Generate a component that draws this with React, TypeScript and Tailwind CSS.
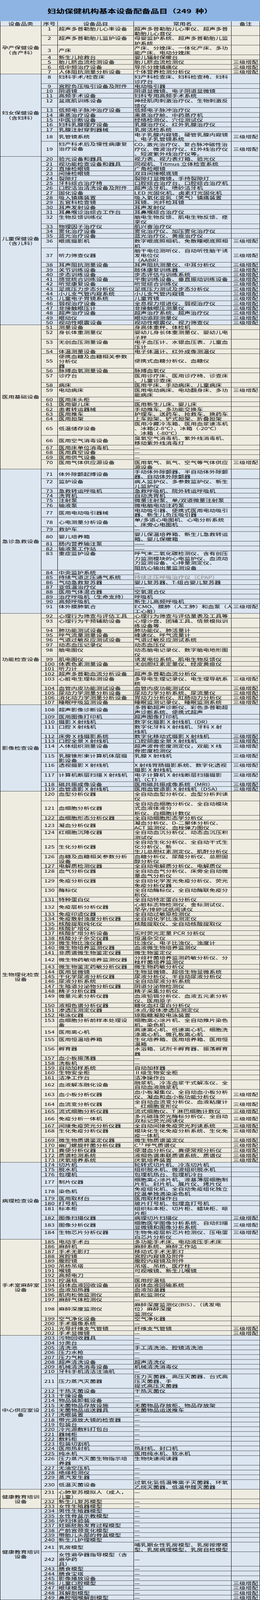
import { useLayoutEffect, useRef, useState } from "react";

const SECTIONS: { cat: string[]; bg: string; rows: string }[] = [
  {
    cat: ["孕产保健设备", "（含产科）"],
    bg: "bg-[#EEECE1]",
    rows: `
1|超声多普勒胎儿心率设备|超声多普勒胎儿心率仪、超声多普^勒胎儿心音仪||t
2|超声多普勒胎儿监护设备|母婴监护系统、超声多普勒胎儿监^护系统||t
3|产床|产床、分娩床、一体化产床、多功^能产床、电动分娩床||m
4|新生儿抢救台|婴儿辐射保暖台||
5|胎儿脐血流检测设备|胎儿脐血流检测仪|3|
6|低中频治疗设备|导乐分娩镇痛仪|3|
7|人体阻抗测量分析设备|个体营养检测分析仪|3|`,
  },
  {
    cat: ["妇女保健设备", "（含妇科）"],
    bg: "bg-[#DCE6F1]",
    rows: `
8|妇科手术/检查床|妇产科检查床、妇科检查椅、妇科^诊疗台||t
9|宫腔负压吸引设备及附件|电动吸引器||
10|阴道镜|阴道显微镜、电子阴道显微镜||
11|高频手术设备|妇科专用高频手术系统||
12|盆底肌训练设备|神经肌肉刺激治疗仪、生物刺激反^馈仪||t
13|低频电子脉冲治疗设备|低频电子脉冲治疗仪||
14|熏蒸治疗设备|熏蒸治疗舱、中药蒸疗机||
15|中医诊断设备|经络检测仪、穴位测试仪||
16|妇科乳腺理疗设备|乳腺治疗仪、红外乳腺治疗仪||
17|乳腺注射穿刺器械|乳房活检系统||
18|乳管镜系统|电子乳腺内窥镜、硬管乳腺内窥镜^、电子乳管镜系统|3|m
19|妇产科术后及慢性病康复^治疗设备|CO₂ 激光治疗仪、复合脉冲磁性治^疗仪、微波治疗仪、红外线治疗仪^、短波紫外线治疗仪等。|3|x`,
  },
  {
    cat: ["儿童保健设备", "（含儿科）"],
    bg: "bg-[#DCE6F1]",
    rows: `
20|验光设备和器具|视力表、视力表灯箱、验光仪||
21|视功能检查设备和器具|同视机、Titmus 立体检查系统||
22|直接检眼镜|广角检眼镜||
23|间接检眼镜|双目间接眼底镜||
24|裂隙灯|裂隙灯显微镜，手持裂隙灯||
25|牙科综合治疗椅|口腔综合治疗台、口腔综合治疗机||
26|口腔洁治清洗设备及附件|超声洁牙机、喷砂洁牙机||
27|固化设备|LED 光固化机、卤素灯光固化机||
28|吸入镇痛装置|吸入氧化亚氮（笑气）镇痛装置||
29|五官科检查镜|耳镜、光纤检耳镜||
30|耳声发射设备|耳声发射仪||
31|耳鼻喉诊治综合工作台|耳鼻喉综合治疗仪||
32|生物反馈训练仪|脑电生物反馈、肌电生物反馈、痉^挛仪||t
33|物理因子治疗仪|肌兴奋治疗仪||
34|雾化治疗设备|雾化治疗仪、加压雾化治疗仪||
35|蓝光治疗设备|蓝光治疗仪、黄疸治疗仪||
36|眼底摄影机|数字眼底照相机、免散瞳眼底照相^机|3|t
37|听力筛查仪器|脑干电位测听仪、自动听性脑干诱^发电位仪^（AABR）|3|m
38|耳声阻抗测量设备|耳声阻抗测量仪、中耳分析仪|3|
39|关节训练设备|肢体康复训练器|3|
40|步态训练设备|步态评估与训练系统|3|
41|感觉统合训练设备|平衡训练设备、垂直振动训练设备|3|
42|听觉康复设备|听觉综合训练仪|3|
43|足底压力步态分析仪|足底压力测试及步态分析仪|3|
44|小儿支气管内窥系统|小儿支气管内窥镜|3|
45|儿童电子胃镜系统|儿童胃镜|3|
46|弱视治疗设备|全息视力增进仪、弱视治疗仪|3|
47|非接触眼压计|非接触眼压测量仪|3|
48|超声治疗设备|超声治疗系统、超声治疗仪|3|
49|眼动仪|眼动追踪测量仪|3|
50|视动性眼震设备|视动性眼震仪、视力筛查仪|3|`,
  },
  {
    cat: ["医用基础设备"],
    bg: "bg-[#EEECE1]",
    rows: `
51|测量设备|身高体重秤、体检机||
52|身长体重测量仪|婴幼儿身长体重测量仪、婴幼儿电^子秤||t
53|无创血压测量设备|电子血压计、水银血压表、儿童血^压计||t
54|体温测量设备|电子体温计、红外成像测温仪||
55|便携血糖及血糖相关参数^分析仪^器|便携式血糖分析仪、血糖仪||x
56|脉搏血氧测量设备|脉搏血氧仪||
57|诊疗台|医用诊疗床、医用诊疗椅、诊查床^、儿童诊查床||t
58|病床|医用平床、手动病床、儿童病床||
59|电动病床|医用电动病床、电动翻身床、多功^能病床|3|t
60|医用床头柜|—||
61|医用婴儿床|医用新生儿床、婴儿床||
62|患者转运器械|手动推车、多功能交换车||
63|医用推车|护理车、送药车、抢救车、换药车||
64|医用担架|上车担架、铲式担架、折叠担架||
65|低温储存设备|医用冷藏冷冻箱、医用血浆速冻机^、冰箱(2-8℃）、冰箱（-20℃）^、冰箱（-80℃）||m
66|医用空气消毒设备|臭氧空气消毒机、紫外线消毒机、^移动紫外线消毒灯||m
67|医用床单位消毒机|—||
68|医用真空设备|—||
69|医用供气设备|—||
70|医用气体供应源设备|医用氧气、氮气、空气等气体供应^源设备|3|t`,
  },
  {
    cat: ["急诊急救设备"],
    bg: "bg-[#DCE6F1]",
    rows: `
71|体外除颤起搏设备|手动体外除颤器、半自动体外除颤^器、自动体外除颤器||m
72|监护设备|病人监护仪、多参数监护仪、新生^儿监护仪||t
73|急救转运呼吸机|急救呼吸机、院外转运呼吸机||
74|洗胃机|自动洗胃机||
75|注射泵|微量注射泵、单/双道微量注射泵||
76|输液泵|微电脑电动注药泵||
77|医用电动吸引器械|电动吸引器、便携式医用电动吸引^器、新生儿负压吸引器||m
78|心电测量分析设备|单/多道心电图机、心电分析系统^、床旁心电图机||m
79|救护车|—||
80|婴儿培养箱|婴儿保温培养箱、新生儿急救转运^箱、婴儿保暖箱||m
81|肠内营养输注泵|——||
82|输液泵工作站|——||
83|重症监护设备|呼气末二氧化碳检测仪、含有创压^力监测模块的心电监护仪、血流动^力监测设备、心排量测定仪、^阻抗心输出量监测设备||t
84|中央监护系统|—||
85|持续气道正压通气系统|持续正压呼吸治疗仪（CPAP）||
86|气动急救复苏器|婴儿复苏器、T-组合婴儿复苏器||
87|亚低温治疗仪|——||
88|医用气体混合器|空氧混合仪||
89|治疗呼吸机（生命支持）|呼吸机||
90|高频呼吸机|新生儿高频呼吸机||
91|体外膜肺氧合|ECMO、膜肺（人工肺）和血泵（人^工心脏）|3|t`,
  },
  {
    cat: ["功能检查设备"],
    bg: "bg-[#EEECE1]",
    rows: `
92|心理行为筛查与评估工具|心理行为筛查与评估量表及工具等||
93|心理行为干预辅助设备|心理沙盘、团辅工具、情景模拟训^练设备等||t
94|肺功能测试设备|肺功能仪、肺活量计||
95|呼气流量测量设备|峰速仪、呼气流量计||
96|气道过敏反应测试设备|气道过敏反应测试系统||
97|动态血压记录仪|动态血压仪||
98|脑电图仪|动态脑电记录仪、数字脑电地形图^仪||t
99|肌电图仪|诱发电位系统、肌电生物反馈仪||
100|体表色素测量设备|无创胆红素定量仪、经皮黄疸仪||
101|听力计|—||
102|超声多普勒血流分析设备|超声多普勒血流分析仪||
103|心脏电生理标测设备|多导电生理记录仪、电生理导航系^统|3|t
104|血管内皮功能测试设备|血管内皮功能测试仪|3|
105|尿动力学测量分析设备|尿动力学分析系统、尿流量仪|3|
106|消化动力学测量分析设备|胃动力分析仪、肛肠动力分析仪|3|
107|睡眠呼吸监测设备|睡眠监测记录仪、睡眠监测系统|3|`,
  },
  {
    cat: ["影像检查设备"],
    bg: "bg-[#DCE6F1]",
    rows: `
108|超声影像诊断设备|多普勒超声诊断仪、彩色多普勒超^声诊断系统、便携式超声||m
109|医用图像打印机|超声图像打印机||
110|摄影 X 射线机|数字化摄影 X 射线机（DR）||
111|口腔 X 射线机|数字化牙科 X 射线机、牙科 X 射^线机||t
112|床旁 X 线摄影系统|数字化移动式摄影 X 射线机|3|
113|口腔全景 X 射线机|口腔颌面全景 X 射线机|3|
114|人体组织测量设备|超声波骨密度测定仪，双能 X 线^骨密度检测仪|3|t
115|乳腺锥形束计算机体层摄^影设备|乳腺 X 射线机|3|t
116|透视摄影 X 射线机|X 射线胃肠摄影系统、数字化透视^摄影 X 射线机|3|t
117|计算机断层扫描 X 射线机|电子计算机 X 射线断层扫描摄影^机（CT）|3|t
118|磁共振成像设备|医用磁共振成像系统（MRI）|3|
119|血管造影 X 射线机|医用血管造影 X 射线机（DSA）|3|`,
  },
  {
    cat: ["生物理化检查", "设备"],
    bg: "bg-[#EEECE1]",
    rows: `
120|血型分析仪器|全自动血型分析仪、血型分析判读^仪||t
121|血细胞分析仪器|全自动血细胞分析仪、全自动模块^式血液体液分^析仪、白细胞计数仪||m
122|血细胞形态分析仪器|全自动细胞形态学分析仪||
123|凝血分析仪器|凝血分析仪、D-二聚体分析仪、^ACT 监测仪、血栓弹力图仪||m
124|红细胞沉降仪器|全自动血沉分析仪、动态血沉压积^测试仪||t
125|生化分析仪器|全自动生化分析仪、全自动干式生^化分析仪、新^生儿总胆红素测定仪、肌酐分析仪||m
126|血糖及血糖相关参数分析^设备|血糖分析仪、尿酸分析仪、总胆固^醇分析仪||t
127|电解质检测仪器|全自动电解质分析仪、电解质仪||
128|血气分析仪器|全自动血气分析仪、床旁全自动微^量血气分析仪||t
129|免疫分析仪器|全自动化学发光免疫分析仪、荧光^免疫分析仪器||t
130|酶标仪|全自动酶标仪，全自动酶联免疫分^析仪、||t
131|特种蛋白仪|全自动特定蛋白分析仪||
132|免疫层析分析仪器|心脏标志物检测仪、金标测试仪、^早孕/排卵试纸阅读仪||m
133|免疫印迹仪器|全自动过敏原检测仪||
134|免疫散射浊度分析仪器|全自动化学比浊测定仪||
135|核酸提取纯化仪|核酸提取仪、全自动核酸提取仪||
136|核酸扩增仪|—||
137|核酸扩增分析设备|实时荧光定量 PCR 分析仪||
138|核酸分子杂交仪器|恒温杂交仪||
139|微生物比浊仪器|比浊仪、电子比浊仪、浊度计||
140|微生物培养监测仪器|血液微生物培养监测仪||
141|非质谱微生物鉴定仪器|微生物鉴定仪||
142|微生物药敏培养监测仪器|分歧杆菌培养监测药敏分析仪、分^枝杆菌培养监测仪||m
143|微生物鉴定药敏分析仪器|微生物药敏分析仪||
144|医用显微镜|生物显微镜、超倍生物显微系统||
145|干化学尿液分析仪器|尿液分析仪、半自动尿液分析仪||
146|尿液分析系统|全自动尿液分析系统||
147|生殖道分泌物分析仪器|阴道分泌物检测仪||
148|精子分析仪器|精子采集分析仪||
149|微量元素分析仪器|血液铅镉分析仪、血液五元素分析^仪、医用原子||t
150|液相色谱分析仪器|糖化血红蛋白分析仪||
151|渗透压测定仪器|冰点/胶体渗透压测定仪||
152|电泳仪器|琼脂糖凝胶电泳装置||
153|血细胞分析前样本处理设^备|细胞离心涂片机、全自动推片染色^机、染色机||t
154|医用离心机|高速离心机、低速离心机、细胞洗^涤离心机、微孔板离心机||m
155|医用恒温培养箱|生化培养箱、医用培养箱、医用恒^温箱||t
156|孵育器|水浴箱、试剂卡孵育器、振荡孵育^器||t
157|血小板振荡器|—||
158|洗板机|—||
159|自动加样系统|自动加样器||
160|生物安全柜|Ⅱ级生物安全柜||
161|洁净工作台|洁净操作台||
162|血液解冻融化设备|融浆机、冷冻血浆干式解冻仪、全^自动血液融浆机||m
163|血小板分析仪器|血小板凝集仪、全自动血小板分析^仪、凝血和血小板功能分析仪|3|m
164|血流变分析仪器|全自动血流变分析仪、血液粘度计^、红细胞变形仪|3|m
165|流式细胞分析仪器|流式细胞仪、T 淋巴细胞计数仪|3|
166|免疫分析一体机|多元磁珠荧光酶标分析仪、全自动^双标记荧光阅读仪|3|m
167|间接免疫荧光分析仪器|全自动间接免疫荧光判读系统|3|
168|生化免疫分析仪器|模块化生化免疫分析系统、生化免^疫一体机|3|t
169|微生物质谱鉴定仪器|微生物质谱鉴定仪|3|
170|幽门螺旋杆菌分析仪器|C¹³ 呼气质谱仪|3|
171|粪便分析仪器|便潜血分析仪、粪便常规分析仪|3|
172|质谱检测系统|液相色谱串联质谱系统、质谱仪|3|
173|厌氧培养系统|厌氧培养装置|3|`,
  },
  {
    cat: ["病理检查设备"],
    bg: "bg-[#DCE6F1]",
    rows: `
174|切片机|轮转式切片机、冷冻切片机||
175|脱水机|组织脱水机、微波组织脱水机||
176|包埋机|包埋机热台、包埋机冷台||
177|制片仪器|细胞离心涂片机、液基薄层细胞制^片机、封片机、展片仪、烤片仪||m
178|染色机|免疫组化机、全自动免疫组化独立^控温单独滴染染色机||m
179|医用取材台|医用取材操作台||
180|打号机|玻片打号机、包埋盒打号机||
181|标本柜|组织标本柜、切片柜、蜡块柜、晾^片柜||t
182|图像扫描仪器|病理切片扫描仪|3|
183|图像分析仪器|细胞医学图像分析系统、自动扫描^显微镜和图像分析系统|3|m
184|生物芯片分析仪器|生物免疫层析芯片检测仪、压电蛋^白芯片分析仪|3|t`,
  },
  {
    cat: ["手术室麻醉室", "设备"],
    bg: "bg-[#EEECE1]",
    rows: `
185|电动手术台|多功能手术床、电动液压手术床||
186|麻醉机|麻醉系统、麻醉工作站||
187|手术无影灯|移动式手术无影灯||
188|宫腔镜|宫腔内窥镜及附件||
189|腹腔镜|腹腔内窥镜及附件||
190|吊桥吊塔|吊塔、吊桥、医疗柱||
191|喉镜|可视喉镜、新生儿喉镜||
192|高频电刀|—||
193|控温毯|医用控温毯||
194|自体血液回收设备|自体血液回输系统||
195|血液加热器|血液加温器||
196|肌肉松弛监测仪|肌松监测仪||
197|麻醉气体检测仪|—||
198|麻醉深度监测仪|麻醉深度监测仪(BIS）、（诱发电^位）麻醉深度^监测仪||m
199|空气净化设备|空气净化器||
200|手术摄像系统|—||
201|光导纤维支气管镜|纤维支气管镜|3|
202|手术显微镜|—|3|`,
  },
  {
    cat: ["中心供应室设", "备"],
    bg: "bg-[#DCE6F1]",
    rows: `
203|污物回收器具|—||
204|分类台|—||
205|清洗池|手工清洗池、腔镜清洗池||
206|压力水枪|—||
207|压力气枪|—||
208|超声清洗设备|超声清洗仪||
209|机械清洗消毒设备|机械清洗消毒仪||
210|牙科手机清洁注油机|—||
211|压力蒸汽灭菌器|压力灭菌器、高压灭菌器、台式高^压灭菌器、手^提式高压灭菌器||m
212|干热灭菌设备|干热灭菌仪||
213|干燥设备|—||
214|物品装卸载设备|—||
215|无菌物品存放设施|无菌物品存放柜、物品存放架||
216|无菌物品运送器具|无菌物品运送推车||
217|洗眼装置|—||
218|带光源放大镜的检查器|—||
219|包装台|—||
220|冷光源敷料打包台|—||
221|器械柜|—||
222|敷料柜|—||
223|包装切割机|—||
224|医用热封机|热封机、封口机||
225|纯水机|医用纯水机、软水机||
226|压力蒸汽灭菌生物指示培^养器|生物快速阅读器||t
227|无油空压机|—||
228|绝缘检测仪|—||
229|蒸汽发生器|—||
230|低温灭菌设备|过氧化氢低温等离子灭菌器、环氧^乙烷灭菌器、低温甲醛灭菌器||m`,
  },
  {
    cat: ["健康教育培训", "设备"],
    bg: "bg-[#EEECE1]",
    rows: `
231|心肺复苏模拟人（成人，^儿童）|—||t
232|新生儿复苏模型|—||
233|女性生殖器模型|—||`,
  },
  {
    cat: ["健康教育培训", "设备"],
    bg: "bg-[#DCE6F1]",
    rows: `
234|男性生殖器模型|—||
235|女性骨盆示教模型|—||
236|孕妇体验装|—||
237|妊娠胚胎发育过程模型|—||
238|产前宫颈变化模型|—||
239|带胎儿头部的骨盆模型|—||
240|新生儿护理模型|—||
241|乳房模型|哺乳期女性乳房模型、乳房按摩模^型、乳房病理模型、乳房自检模型||m
242|女性避孕器指导模型（含^避孕药^具）|—||m
243|膳食模型|—||
244|膳食宝塔|—||
245|影像播放设备|—||
246|儿童口腔模型|—|3|
247|眼球模型|—|3|
248|耳解剖模型|—|3|
249|鼻腔咽喉解剖模型|—|3|`,
  },
];

interface Row {
  n: string;
  a: string[];
  b: string[];
  note: string;
  v: string;
}

const parseRows = (src: string): Row[] =>
  src
    .trim()
    .split("\n")
    .map((line) => {
      const [n, a, b, note, v] = line.trim().split("|");
      return {
        n,
        a: a.split("^"),
        b: b.split("^"),
        note: note === "3" ? "三级增配" : "",
        v: v || "m",
      };
    });

const HEIGHTS: Record<number, string> = {
  1: "h-[19px]",
  2: "h-[38px]",
  3: "h-[57px]",
  4: "h-[76px]",
};

const rowHeight = (r: Row) => {
  if (r.n === "19") return "h-[60px]";
  if (r.n === "170") return "h-[22px]";
  return HEIGHTS[Math.max(r.a.length, r.b.length)];
};

const Lines = ({ lines }: { lines: string[] }) => (
  <>
    {lines.map((l, i) => (
      <div key={i} className="leading-[18.5px] whitespace-nowrap">
        {l}
      </div>
    ))}
  </>
);

const TableRow = ({ r }: { r: Row }) => {
  // v: t = top, m = middle, x = item top / rest middle
  const top = r.v === "t";
  const itemTop = r.v === "t" || r.v === "x";
  const gray = r.n === "85";

  return (
    <div className={`flex border-b border-black ${rowHeight(r)}`}>
      <div className={`w-[42px] shrink-0 border-r border-black flex flex-col items-center pt-[1px] ${top ? "justify-start" : "justify-center"}`}>
        <Lines lines={[r.n]} />
      </div>
      <div className={`w-[195px] shrink-0 border-r border-black flex flex-col pl-[2px] pt-[1px] ${itemTop ? "justify-start" : "justify-center"}`}>
        <Lines lines={r.a} />
      </div>
      <div className={`w-[250px] shrink-0 border-r border-black flex flex-col pl-[1px] pt-[1px] ${top ? "justify-start" : "justify-center"} ${gray ? "text-[#7f7f7f]" : ""}`}>
        <Lines lines={r.b} />
      </div>
      <div className={`flex-1 border-r border-black flex flex-col items-center pt-[1px] ${top ? "justify-start" : "justify-center"}`}>
        {r.note && <Lines lines={[r.note]} />}
      </div>
    </div>
  );
};

export default function App() {
  const pageRef = useRef<HTMLDivElement>(null);
  // the window can be shorter than the sheet; squeeze the sheet vertically so all of it shows
  const [fit, setFit] = useState<{ k: number; h: number } | null>(null);

  useLayoutEffect(() => {
    const el = pageRef.current;
    if (!el) return;
    const h = el.offsetHeight;
    const k = Math.min(1, window.innerHeight / h);
    if (k < 1) setFit({ k, h: h * k });
  }, []);

  return (
    <div className="w-[666px] overflow-hidden" style={fit ? { height: fit.h } : undefined}>
      <div
        ref={pageRef}
        className="w-[666px] origin-top bg-white text-black text-[16px] font-['Noto_Sans_CJK_SC',sans-serif]"
        style={fit ? { transform: `scaleY(${fit.k})` } : undefined}
      >
        <div className="h-[84px] bg-[#8DB4E2] flex items-center justify-center">
          <h1 className="text-[22px] font-bold pt-[2px]">妇幼保健机构基本设备配备品目（249&nbsp;&nbsp;种）</h1>
        </div>

        <div className="border-l border-black">
          <div className="flex h-[19px] border-b border-black bg-[#DCE6F1]">
            <div className="w-[105px] shrink-0 border-r border-black flex items-center justify-center leading-[18.5px] pt-[1px]">设备品类</div>
            <div className="w-[42px] shrink-0 border-r border-black flex items-center justify-center leading-[18.5px] pt-[1px]">序号</div>
            <div className="w-[195px] shrink-0 border-r border-black flex items-center justify-center leading-[18.5px] pt-[1px]">设备品目</div>
            <div className="w-[250px] shrink-0 border-r border-black flex items-center justify-center leading-[18.5px] pt-[1px]">常用名</div>
            <div className="flex-1 border-r border-black flex items-center justify-center leading-[18.5px] pt-[1px]">备注</div>
          </div>

          {SECTIONS.map((s, i) => (
            <div key={i} className={`flex ${s.bg}`}>
              <div className="w-[105px] shrink-0 border-r border-b border-black flex flex-col items-center justify-center text-center">
                <Lines lines={s.cat} />
              </div>
              <div className="flex-1 flex flex-col">
                {parseRows(s.rows).map((r) => (
                  <TableRow key={r.n} r={r} />
                ))}
              </div>
            </div>
          ))}
        </div>
      </div>
    </div>
  );
}
